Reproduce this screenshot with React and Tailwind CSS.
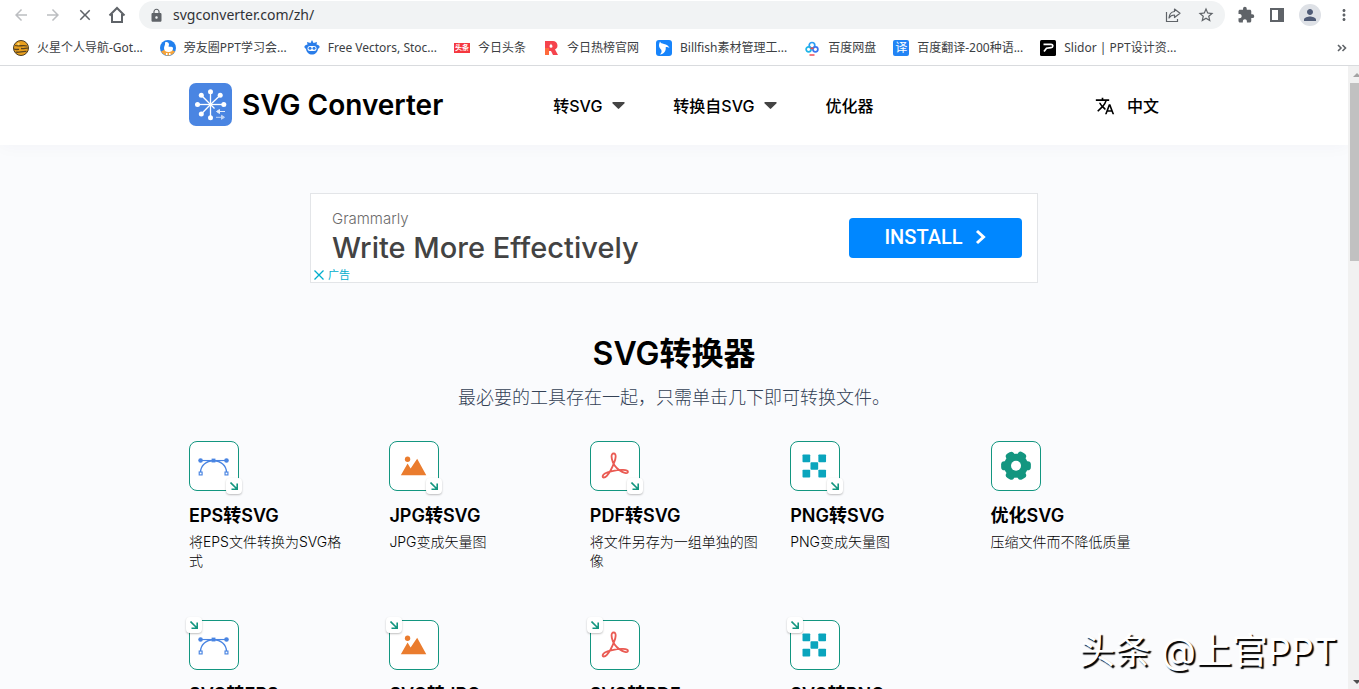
/**
 * SVG Converter home page, shown inside a browser window.
 */

import {
  MdArrowBack,
  MdArrowForward,
  MdClose,
  MdLock,
  MdStarBorder,
  MdExtension,
  MdPerson,
  MdMoreVert,
  MdTranslate,
} from "react-icons/md";

function PlanetIcon() {
  return (
    <svg viewBox="0 0 16 16" className="size-4">
      <circle cx="8" cy="8" r="7.5" fill="#e9a01f" stroke="#4a3c25" />
      <path d="M2 5.500c4 1.500 8-1 12 .5M8 8.500c3 .5 5-.8 7-.3M1 9c2 .8 3 .5 5 .3M2.500 12c3 1 7-1 11-.5" stroke="#5b4520" strokeWidth="1.300" fill="none" />
      <circle cx="5.500" cy="4" r="1.200" fill="#ffd76b" />
    </svg>
  );
}

function DuckIcon() {
  return (
    <svg viewBox="0 0 16 16" className="size-4">
      <circle cx="8" cy="8" r="8" fill="#2180ee" />
      <path d="M1 11.500a8 8 0 0 0 14 0L12 10H4z" fill="#f6a43b" />
      <path d="M5 2.500c2-1 4 0 4 2l-.5 2c2 .5 4-.5 4.500 1.500 0 3-2 4-4.500 4-3 0-4.500-1.500-4.500-4 0-2 1.500-3 1-5.500z" fill="#fff" />
      <path d="M6 13h1.500v2H6zM9 13h1.500v2H9z" fill="#fff" />
    </svg>
  );
}

function RobotIcon() {
  return (
    <svg viewBox="0 0 16 16" className="size-4">
      <path d="M8 0l1.500 3L13 2l-.5 2.500C15 5 16 6 15.500 7.500L14 9c-.5 3.500-3 5.500-6 5.500S2.500 12.500 2 9L.5 7.500C0 6 1 5 3.500 4.500L3 2l3.500 1z" fill="#2a7de9" />
      <rect x="3.500" y="6" width="9" height="5" rx="2.500" fill="#fff" />
      <circle cx="6" cy="8.300" r="1.500" fill="#2a7de9" />
      <circle cx="10" cy="8.300" r="1.500" fill="#2a7de9" />
    </svg>
  );
}

function ToutiaoIcon() {
  return (
    <span className="flex h-[10px] w-4 items-center justify-center bg-[#f5373f] text-[7px] leading-none font-bold text-white">头条</span>
  );
}

function HotListIcon() {
  return (
    <svg viewBox="0 0 16 16" className="size-4">
      <path d="M2 1h8a4.500 4.500 0 0 1 2 8.500L15 15h-5l-2-4H6v4H2z" fill="#f5434d" />
      <path d="M2 8h4v7H2z" fill="#ff6a3c" />
      <path d="M8 3.500c.3 1.500 1.500 1.500 1.500 2.800A1.500 1.500 0 0 1 6.500 6.300C6.500 5 7.500 5 8 3.500z" fill="#fff" />
    </svg>
  );
}

function BillfishIcon() {
  return (
    <svg viewBox="0 0 16 16" className="size-4">
      <rect width="16" height="16" rx="3" fill="#1784fb" />
      <path d="M4 1.500c.5 1.500 2 2 4 2.500 2.500.5 4.500 1.500 5.500 4-1.500-1-2.800-1.200-3.800-.8.500 3.500-1.700 6.800-5.700 7.300 1.500-1.500 2-3 1.200-4.700C4.500 8.500 3 8 3 5.500c0-1.500.5-2.500 1-4z" fill="#fff" />
    </svg>
  );
}

function PanIcon() {
  return (
    <svg viewBox="0 0 16 16" className="size-4" fill="none" strokeWidth="1.700">
      <circle cx="8" cy="5.300" r="2.800" stroke="#2a9df4" />
      <circle cx="4.600" cy="9.300" r="2.500" stroke="#20b4e8" />
      <circle cx="11.400" cy="9.300" r="2.500" stroke="#3a76f0" />
      <path d="M6.500 8.300h3" stroke="#f04848" />
      <path d="M5.500 15h5" stroke="#ef3f4c" strokeWidth="1.400" />
    </svg>
  );
}

function TranslateSiteIcon() {
  return (
    <span className="flex size-4 items-center justify-center rounded-[2px] bg-[#2284f5] text-xs leading-none text-white">译</span>
  );
}

function SlidorIcon() {
  return (
    <svg viewBox="0 0 16 16" className="size-4">
      <rect width="16" height="16" rx="1.500" fill="#000" />
      <path d="M3.500 4.300H11c2.500 0 2.300 3.200 0 3.400L6.500 8.200 4 11.500" stroke="#fff" strokeWidth="1.700" fill="none" />
    </svg>
  );
}

const bookmarks = [
  { label: "火星个人导航-Got...", Icon: PlanetIcon },
  { label: "旁友圈PPT学习会...", Icon: DuckIcon },
  { label: "Free Vectors, Stoc...", Icon: RobotIcon },
  { label: "今日头条", Icon: ToutiaoIcon },
  { label: "今日热榜官网", Icon: HotListIcon },
  { label: "Billfish素材管理工...", Icon: BillfishIcon },
  { label: "百度网盘", Icon: PanIcon },
  { label: "百度翻译-200种语...", Icon: TranslateSiteIcon },
  { label: "Slidor | PPT设计资...", Icon: SlidorIcon },
];

function BrowserBar() {
  return (
    <div className="shrink-0 border-b border-[#d9dbde] bg-white font-['Noto_Sans','Noto_Sans_CJK_SC',sans-serif] text-[#5f6368]">
      <div className="flex h-[30px] items-center pr-[6px] pl-3">
        <div className="flex items-center gap-[14px]">
          <button aria-label="Back" className="text-[#bcbec1]"><MdArrowBack className="size-[18px]" /></button>
          <button aria-label="Forward" className="text-[#bcbec1]"><MdArrowForward className="size-[18px]" /></button>
          <button aria-label="Stop"><MdClose className="size-[18px]" /></button>
          <button aria-label="Home">
            <svg viewBox="0 0 18 18" className="size-[18px]" fill="none" stroke="currentColor" strokeWidth="2">
              <path d="M1.500 9.500L9 2l7.500 7.500M4 8v8h10V8" />
            </svg>
          </button>
        </div>
        <div className="ml-[13px] flex h-7 flex-1 items-center rounded-full bg-[#f1f3f4] px-[10px]">
          <MdLock className="size-[15px] shrink-0" />
          <input
            aria-label="Address"
            defaultValue="svgconverter.com/zh/"
            className="ml-[9px] min-w-0 flex-1 bg-transparent text-sm text-[#303236] outline-none"
          />
          <button aria-label="Share" className="mr-4">
            <svg viewBox="0 0 16 16" className="size-4" fill="none" stroke="currentColor" strokeWidth="1.200">
              <path d="M1.500 5v9.500h11V12" />
              <path d="M9.500 2l5.500 4.300-5.500 4.200V8C7 8 5.300 8.800 4 11c.2-3.500 2-6 5.500-6.500z" strokeLinejoin="round" />
            </svg>
          </button>
          <button aria-label="Bookmark"><MdStarBorder className="size-[18px]" /></button>
        </div>
        <div className="ml-3 flex items-center gap-[14px]">
          <button aria-label="Extensions"><MdExtension className="size-[18px]" /></button>
          <button aria-label="Side panel">
            <svg viewBox="0 0 16 16" className="size-4">
              <path d="M1 1h14v14H1zM3 3v10h6V3z" fill="currentColor" fillRule="evenodd" />
            </svg>
          </button>
          <button aria-label="Profile" className="flex size-[22px] items-center justify-center rounded-full bg-[#dee1e6] text-[#4f5b76]">
            <MdPerson className="size-[18px]" />
          </button>
          <button aria-label="Menu"><MdMoreVert className="size-[18px]" /></button>
        </div>
      </div>
      <div className="flex h-[35px] items-center gap-[17px] pr-3 pl-[13px] text-xs text-[#3c4043]">
        {bookmarks.map(({ label, Icon }) => (
          <a key={label} href="#" className="flex items-center gap-2 whitespace-nowrap">
            <Icon />
            {label}
          </a>
        ))}
        <button aria-label="More bookmarks" className="ml-auto">
          <svg viewBox="0 0 10 8" className="h-2 w-[10px]" fill="none" stroke="#5f6368" strokeWidth="1.600">
            <path d="M1 1l3 3-3 3M5.500 1l3 3-3 3" />
          </svg>
        </button>
      </div>
    </div>
  );
}

function Logo() {
  const ends = [[21.5, 8.7], [12.3, 12.3], [31.2, 12.3], [8.5, 21.5], [34.8, 21.5], [12.3, 31], [21.5, 34.7]];
  return (
    <svg viewBox="0 0 43 43" className="size-[43px]">
      <rect width="43" height="43" rx="7" fill="#4a85e2" />
      {ends.map(([x, y]) => (
        <g key={`${x}-${y}`}>
          <path d={`M21.500 21.500L${x} ${y}`} stroke="#fff" strokeWidth="1.300" />
          <circle cx={x} cy={y} r="2.500" fill="#fff" />
        </g>
      ))}
      <path d="M21.500 21.500l4 4" stroke="#fff" strokeWidth="1.300" />
      <path d="M36 28.500h-6M30.500 26.500l-3 2 3 2z" stroke="#fff" fill="#fff" strokeWidth="1" opacity=".85" />
      <path d="M27 34.300h6M32.500 32.300l3 2-3 2z" stroke="#fff" fill="#fff" strokeWidth="1" opacity=".65" />
    </svg>
  );
}

function Caret() {
  return (
    <svg viewBox="0 0 12 7" className="h-[7px] w-[13px]" preserveAspectRatio="none">
      <path d="M1 0h10a.8.8 0 0 1 .6 1.300L6.600 6.600a.8.8 0 0 1-1.200 0L.4 1.300A.8.8 0 0 1 1 0z" fill="#444" />
    </svg>
  );
}

function Header() {
  return (
    <header className="relative bg-white shadow-[0_2px_16px_rgba(30,41,80,0.03)]">
      <div className="mx-auto flex h-[79px] max-w-[970px] items-center text-base font-medium">
        <a href="#" className="flex items-center gap-[10px] pb-[2px]">
          <Logo />
          <span className="text-[28px] leading-8 font-semibold">SVG Converter</span>
        </a>
        <nav className="ml-[110px] flex items-center gap-12">
          <button className="flex items-center gap-[10px]">转SVG <Caret /></button>
          <button className="flex items-center gap-[10px]">转换自SVG <Caret /></button>
          <a href="#">优化器</a>
        </nav>
        <button className="ml-auto flex items-center gap-3">
          <MdTranslate className="size-5" />
          中文
        </button>
      </div>
    </header>
  );
}

function Ad() {
  return (
    <aside className="relative mx-auto flex h-[90px] max-w-[728px] items-center justify-between border border-[#e3e5e8] bg-white pr-[15px] pl-[21px]">
      <div>
        <p className="text-[15px] leading-5 font-light text-[#6b6b6b]">Grammarly</p>
        <p className="text-[29px] leading-[38px] font-medium text-[#434343]">Write More Effectively</p>
      </div>
      <button className="flex h-10 w-[173px] items-center justify-center gap-3 rounded-[4px] bg-[#0087ff] pb-[2px] font-['Roboto',sans-serif] text-xl font-medium text-white">
        INSTALL
        <svg viewBox="0 0 12 16" className="h-4 w-3" fill="none" stroke="#fff" strokeWidth="3">
          <path d="M2 2l6.500 6L2 14" />
        </svg>
      </button>
      <a href="#" className="absolute -bottom-px left-[3px] flex items-center gap-1 text-[11px] leading-4 text-[#00aecd]">
        <svg viewBox="0 0 10 10" className="size-[10px]" stroke="currentColor" strokeWidth="1.300">
          <path d="M.5.500l9 9M9.500.500l-9 9" />
        </svg>
        广告
      </a>
    </aside>
  );
}

function CurveIcon() {
  return (
    <svg viewBox="0 0 50 50" className="size-full" fill="none" stroke="#4a85e2">
      <path d="M11 19.300h27" strokeWidth="1.200" />
      <path d="M11 31.500C11 24.500 17 19.500 24.500 19.500S38 24.500 38 31.500" strokeWidth="1.400" />
      <circle cx="11" cy="19.300" r="2.400" fill="#4a85e2" stroke="none" />
      <circle cx="38" cy="19.300" r="2.400" fill="#4a85e2" stroke="none" />
      <rect x="22.500" y="17.300" width="4" height="4" fill="#4a85e2" stroke="none" />
      <rect x="9.600" y="31.300" width="3" height="3" fill="#fff" strokeWidth="1.200" />
      <rect x="36.500" y="31.300" width="3" height="3" fill="#fff" strokeWidth="1.200" />
    </svg>
  );
}

function PhotoIcon() {
  return (
    <svg viewBox="0 0 50 50" className="size-full" fill="#ea7c2e">
      <circle cx="18.300" cy="18" r="2.800" />
      <path d="M11.300 34.700l7-12.200 3.200 5.200 6.800-10.200 9.500 17.200z" />
    </svg>
  );
}

function AcrobatIcon() {
  return (
    <svg viewBox="0 0 50 50" className="size-full" fill="none" stroke="#ea5b53" strokeWidth="1.900" strokeLinejoin="round">
      <path d="M22.900 21.500c-1.700-4.200-2.500-9.500.7-9.500s2.200 5.500.5 9.500c-2 5.300-4.600 10.500-7.600 13.700-2.200 2.300-4.800 2.300-4.300.2.500-2.300 4.500-3.800 8.800-4.800 4-.9 8.500-1.700 12.500-1.500 3.400.2 5.300 1 5 2.300-.4 1.600-3.500 1-6-.3-4-2-7.800-5.700-9.600-9.600z" />
    </svg>
  );
}

function PixelsIcon() {
  return (
    <svg viewBox="0 0 50 50" className="size-full" fill="#0aa5bd">
      <rect x="12" y="13" width="8" height="8" rx=".8" />
      <rect x="28.500" y="13" width="8" height="8" rx=".8" />
      <rect x="20.300" y="21" width="8" height="8" rx=".8" />
      <rect x="12" y="29" width="8" height="8" rx=".8" />
      <rect x="28.500" y="29" width="8" height="8" rx=".8" />
    </svg>
  );
}

function GearIcon() {
  return (
    <svg viewBox="0 0 50 50" className="size-full" fill="#139680">
      <rect x="9.500" y="20" width="31" height="9.500" rx="3.500" />
      <rect x="9.500" y="20" width="31" height="9.500" rx="3.500" transform="rotate(60 25 24.700)" />
      <rect x="9.500" y="20" width="31" height="9.500" rx="3.500" transform="rotate(120 25 24.700)" />
      <circle cx="25" cy="24.700" r="12.500" />
      <circle cx="25" cy="24.700" r="5.200" fill="#fff" />
    </svg>
  );
}

const tools = [
  { title: "EPS转SVG", text: "将EPS文件转换为SVG格\n式", Icon: CurveIcon, arrow: "to" },
  { title: "JPG转SVG", text: "JPG变成矢量图", Icon: PhotoIcon, arrow: "to" },
  { title: "PDF转SVG", text: "将文件另存为一组单独的图像", Icon: AcrobatIcon, arrow: "to" },
  { title: "PNG转SVG", text: "PNG变成矢量图", Icon: PixelsIcon, arrow: "to" },
  { title: "优化SVG", text: "压缩文件而不降低质量", Icon: GearIcon },
  { title: "SVG转EPS", Icon: CurveIcon, arrow: "from" },
  { title: "SVG转JPG", Icon: PhotoIcon, arrow: "from" },
  { title: "SVG转PDF", Icon: AcrobatIcon, arrow: "from" },
  { title: "SVG转PNG", Icon: PixelsIcon, arrow: "from" },
];

function ArrowBadge({ arrow }) {
  const place = arrow === "to" ? "-right-1 -bottom-1" : "-left-1 -top-1";
  return (
    <span className={`absolute ${place} flex size-4 items-center justify-center rounded bg-white shadow-[0_1px_2px_rgba(0,0,0,0.25)]`}>
      <svg viewBox="0 0 8 8" className="size-2" fill="none" stroke="#139680" strokeWidth="1.600">
        <path d="M.5.500L7 7M7.200 1.500v5.700H1.500" />
      </svg>
    </span>
  );
}

function ToolCard({ title, text, Icon, arrow }) {
  return (
    <a href="#" className="block">
      <span className="relative block size-[50px] rounded-lg border border-[#139680] bg-white">
        <Icon />
        {arrow && <ArrowBadge arrow={arrow} />}
      </span>
      <h2 className="mt-[13px] text-lg leading-6 font-semibold">{title}</h2>
      <p className="mt-1 text-sm leading-[19px] font-light whitespace-pre-line">{text}</p>
    </a>
  );
}

function Scrollbar() {
  return (
    <div className="flex w-[11px] shrink-0 flex-col items-center bg-[#f1f1f1]">
      <svg viewBox="0 0 11 17" className="h-[17px] w-[11px]"><path d="M5 11h8L9 7z" fill="#a3a3a3" /></svg>
      <div className="ml-[2px] h-2/7 w-[9px] bg-[#c1c1c1]" />
      <svg viewBox="0 0 11 17" className="mt-auto h-[17px] w-[11px]"><path d="M5 8h8l-4 4z" fill="#505050" /></svg>
    </div>
  );
}

export default function App() {
  return (
    <div className="relative flex h-screen flex-col overflow-hidden bg-[#fafbfd] font-['Inter','Noto_Sans_CJK_SC',sans-serif] text-black">
      <BrowserBar />
      <div className="flex min-h-0 flex-1">
        <div className="min-w-0 flex-1 overflow-hidden">
          <Header />
          <main className="pt-12">
            <Ad />
            <h1 className="mt-[51px] text-center text-[32px] leading-10 font-semibold">SVG转换器</h1>
            <p className="mt-3 text-center text-lg leading-6 font-light text-[#334155]">最必要的工具存在一起，只需单击几下即可转换文件。</p>
            <div className="mx-auto mt-[31px] grid max-w-[970px] grid-cols-5 gap-x-8 gap-y-[50px]">
              {tools.map((tool) => (
                <ToolCard key={tool.title} {...tool} />
              ))}
            </div>
          </main>
        </div>
        <Scrollbar />
      </div>
      <p className="absolute right-[22px] bottom-[14px] text-4xl leading-12 text-white [text-shadow:2px_2px_1px_#000]">头条 @上官PPT</p>
    </div>
  );
}
